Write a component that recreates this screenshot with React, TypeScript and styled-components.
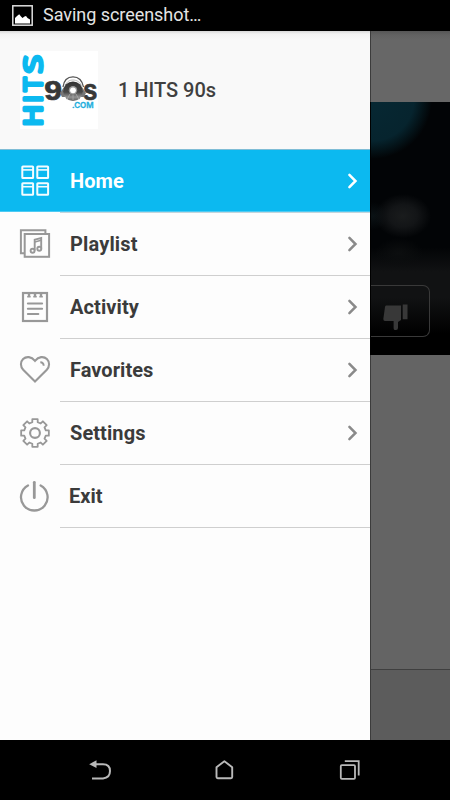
import React from "react";
import styled, { createGlobalStyle } from "styled-components";

const GlobalStyle = createGlobalStyle`
  * { box-sizing: border-box; }
  body { margin: 0; background: #000; font-family: Roboto, sans-serif; }
`;

const Screen = styled.div`
  width: 450px;
  height: 800px;
  display: flex;
  flex-direction: column;
  overflow: hidden;
  background: #000;
`;

const StatusBar = styled.header`
  height: 31px;
  flex: none;
  display: flex;
  align-items: center;
  gap: 10px;
  padding: 0 0 1px 12px;
  color: #e4e4e4;
  font-size: 18px;
  line-height: 22px;
  letter-spacing: -0.04px;
`;

const Body = styled.main`
  flex: 1;
  min-height: 0;
  display: flex;
`;

const Drawer = styled.aside`
  width: 370px;
  flex: none;
  background: #fdfdfd;
`;

const Profile = styled.div`
  height: 119px;
  display: flex;
  align-items: center;
  padding: 0 0 1px 20px;
  gap: 20px;
  background: linear-gradient(#d8d8d8 0, #f3f3f3 3px, #f9f9f9 9px);
  border-bottom: 1px solid #7fbdd6;
`;

const Station = styled.div`
  color: #404040;
  font-size: 20px;
  font-weight: 500;
`;

const Menu = styled.nav`
  display: flex;
  flex-direction: column;
`;

const MenuRow = styled.div<{ $active?: boolean }>`
  height: 63px;
  display: flex;
  padding-left: 19px;
  background: ${(p) => (p.$active ? "linear-gradient(#0cb9f0 61px, #8fdcf6 62px, #fdfdfd 62px)" : "#fdfdfd")};
  color: ${(p) => (p.$active ? "#f4fcff" : "#989898")};
`;

const IconCell = styled.div`
  width: 41px;
  padding-top: 15px;
  svg { display: block; }
`;

const RowContent = styled.div<{ $active?: boolean; $shift?: number }>`
  flex: 1;
  display: flex;
  align-items: center;
  justify-content: space-between;
  padding: 0 12px 0 ${(p) => 10 - (p.$shift ?? 0)}px;
  border-bottom: 1px solid ${(p) => (p.$active ? "#c3d5dc" : "#cfcfcf")};
`;

const Label = styled.span<{ $active?: boolean; $spacing: number }>`
  color: ${(p) => (p.$active ? "#fff" : "#3b3b3b")};
  font-size: 20px;
  font-weight: 700;
  line-height: 24px;
  letter-spacing: ${(p) => p.$spacing}px;
`;

const Behind = styled.section`
  flex: 1;
  display: flex;
  flex-direction: column;
  background: #646464;
  border-left: 1px solid #3c3c3c;
`;

const BehindHeader = styled.div`
  height: 71px;
  background: linear-gradient(#565656 0, #626262 4px, #676767 9px);
`;

const Artwork = styled.div`
  height: 253px;
  margin-left: -1px;
  overflow: hidden;
  padding-top: 183px;
  border-left: 1px solid #000;
  background:
    radial-gradient(ellipse 28px 22px at 32px 114px, #1a1c1d 0, #131517 50%, transparent 100%),
    radial-gradient(ellipse 15px 14px at 2px 114px, #0b1215 0, transparent 100%),
    radial-gradient(ellipse 24px 15px at 28px 151px, #0c0e0f 0, transparent 100%),
    radial-gradient(circle 60px at 1px -3px, #062833 0, #06242e 70%, #04151b 84%, transparent 100%),
    linear-gradient(#020406 0, #020406 145px, #111213 170px, #111213 195px, #000 232px);
`;

const DislikeButton = styled.div`
  width: 59px;
  height: 52px;
  border: 1px solid #393939;
  border-left: 0;
  border-radius: 0 7px 7px 0;
  display: flex;
  padding: 18px 0 0 11px;
`;

const BehindFooter = styled.div`
  height: 71px;
  margin-top: auto;
  background: #5c5c5c;
  border-top: 1px solid #3f3f3f;
`;

const NavBar = styled.footer`
  height: 60px;
  flex: none;
  display: flex;
  align-items: center;
  justify-content: space-between;
  padding: 0 90px 0 88px;
  color: #b9b9b9;
`;

const SavedImageIcon = () => (
  <svg width="21" height="21" viewBox="0 0 21 21">
    <rect x=".8" y=".8" width="19.4" height="19.4" fill="none" stroke="#dedede" strokeWidth="1.5" />
    <path d="M3 18.4V13L5 11 7.2 9.3 9 11.5 10.5 13 12.5 11.5 14 11 15.5 13 18 14.5V18.4Z" fill="#fff" />
  </svg>
);

const hitsLetters = [
  { glyph: "H", x: 0, width: 21.6 },
  { glyph: "I", x: 24.2, width: 7.2 },
  { glyph: "T", x: 35.3, width: 13.9 },
  { glyph: "S", x: 53.3, width: 18 },
];

const StationLogo = () => (
  <svg width="78" height="78" viewBox="0 0 78 78" overflow="visible">
    <defs>
      <linearGradient id="disc" x1="0" y1="0" x2="0" y2="1">
        <stop offset="0" stopColor="#333" />
        <stop offset=".55" stopColor="#484848" />
        <stop offset=".8" stopColor="#929292" />
        <stop offset="1" stopColor="#5c5c5c" />
      </linearGradient>
    </defs>
    <rect width="78" height="78" fill="#fff" />
    <g transform="translate(22 75.6) rotate(-90)" fontFamily="Open Sans" fontWeight="400" fontSize="25.5"
      fill="#0cb9f0" stroke="#0cb9f0" strokeWidth="3.4" strokeLinejoin="round">
      {hitsLetters.map(({ glyph, x, width }) => (
        <text key={glyph} x={x} y="0" textLength={width} lengthAdjust="spacingAndGlyphs">{glyph}</text>
      ))}
    </g>
    <g fontFamily="Liberation Sans" fontWeight="700" fill="#383838" stroke="#383838" strokeWidth=".7">
      <text x="24.2" y="49.3" fontSize="27" textLength="17.8" lengthAdjust="spacingAndGlyphs">9</text>
      <text x="63" y="49.3" fontSize="30" textLength="14.4" lengthAdjust="spacingAndGlyphs">s</text>
    </g>
    <path d="M43 36C44 28 48 25.8 53 25.8S62 28 63.5 36" fill="none" stroke="#555" strokeWidth="1.3" />
    <path d="M45 35C47 30 50 29 53 29S60 30.5 61.5 35" fill="none" stroke="#aaa" strokeWidth=".8" />
    <path d="M40 42 44 36 45 46 42 46ZM66 42 62 36 61 46 64 46Z" fill="#777" />
    <ellipse cx="53" cy="40.2" rx="9.8" ry="9.8" fill="url(#disc)" />
    <path d="M50 43 47 48.5M53 44V49.5M56 43 59 48.5" stroke="#aaa" strokeWidth=".8" />
    <circle cx="53" cy="39.3" r="4.2" fill="#999" />
    <circle cx="53" cy="39.3" r="2.9" fill="#fff" />
    <text x="52" y="56.8" fontFamily="Inter" fontWeight="600" fontSize="7.6" textLength="21.5"
      lengthAdjust="spacingAndGlyphs" fill="#22aedd" stroke="#22aedd" strokeWidth=".3">.COM</text>
  </svg>
);

const IconBox = ({ children }: { children: React.ReactNode }) => (
  <svg width="32" height="32" viewBox="0 0 32 32" fill="none" stroke="currentColor" strokeWidth="2">
    {children}
  </svg>
);

const HomeIcon = () => (
  <IconBox>
    {[[3.3, 1.4], [18.3, 1.4], [3.3, 18.2], [18.3, 18.2]].map(([x, y]) => (
      <g key={`${x}-${y}`} strokeWidth="2">
        <rect x={x} y={y} width="10.8" height="11.6" rx=".6" />
        <path d={`M${x} ${y + 3.5}h10.8`} strokeWidth="1.6" />
      </g>
    ))}
  </IconBox>
);

const PlaylistIcon = () => (
  <IconBox>
    <path d="M5 25.3H1.9V2.2H26.4V6" strokeWidth="2" />
    <rect x="5.7" y="6" width="24.4" height="22.8" strokeWidth="2" />
    <path d="M15.7 22.5V11.7L22.2 10V20.5" strokeWidth="1.9" />
    <path d="M15.7 14 22.2 12.3" strokeWidth="1.4" />
    <circle cx="13.6" cy="22.8" r="2" strokeWidth="1.9" />
    <circle cx="20.3" cy="20.8" r="2" strokeWidth="1.9" />
  </IconBox>
);

const ActivityIcon = () => (
  <IconBox>
    <rect x="4" y="2" width="24" height="28" strokeWidth="2.2" />
    <path d="M10 2V6M16 2V6M22 2V6" strokeWidth="2.4" />
    <path d="M8.2 5.7H11.6M14.3 5.7H17.7M20.4 5.7H23.8" strokeWidth="1.6" />
    <path d="M8.9 12.5H23.1M8.9 17.7H23.1M8.9 23H19.3" strokeWidth="2.1" strokeLinecap="round" />
  </IconBox>
);

const HeartIcon = () => (
  <IconBox>
    <path d="M16 27.5 4.2 15.8C1.2 12.6 1.2 8 4.1 5.1 7.3 2 12.4 2.4 16 6.9 19.6 2.4 24.7 2 27.9 5.1 30.8 8 30.8 12.6 27.8 15.8Z" strokeWidth="2.1" />
    <path d="M21.3 8.2C23.3 8.2 24.6 9.6 24.7 11.8" strokeWidth="1.9" />
  </IconBox>
);

const toothCorners: Array<[number, number]> = [
  [11.1, -14], [14.1, -11], [14.1, 11], [11.1, 14],
];
const gearPoints = Array.from({ length: 8 }, (_, tooth) =>
  toothCorners.map(([radius, offset]) => {
    const angle = ((tooth * 45 + offset) * Math.PI) / 180;
    return `${(16 + radius * Math.cos(angle)).toFixed(2)},${(16 + radius * Math.sin(angle)).toFixed(2)}`;
  }).join(" ")
).join(" ");

const SettingsIcon = () => (
  <IconBox>
    <polygon points={gearPoints} strokeWidth="1.8" strokeLinejoin="round" />
    <circle cx="16" cy="16" r="4.9" strokeWidth="2.1" />
  </IconBox>
);

const ExitIcon = () => (
  <IconBox>
    <path d="M9 5.5A13.3 13.3 0 1 0 21.6 5.5" strokeWidth="2.3" strokeLinecap="round" />
    <path d="M15.3 2.3V17.7" strokeWidth="2.8" strokeLinecap="round" />
  </IconBox>
);

const Chevron = ({ active }: { active?: boolean }) => (
  <svg width="11" height="16" viewBox="0 0 11 16" fill="none">
    <path d="M2.4 1.8 8.5 8 2.4 14.2" stroke={active ? "#fff" : "#8a8a8a"} strokeWidth="2.5" strokeLinecap="round" />
  </svg>
);

const ThumbDownIcon = () => (
  <svg width="27" height="28" viewBox="0 0 27 28" fill="#383838">
    <path d="M4 1.5H19V16L16 18V24Q16 26 14 26H12.8Q11.6 26 11.6 24V17H3Q1.3 17 1.3 15L3 3Q3.2 1.5 4 1.5ZM20.7.5H25.5V15.2H20.7Z" />
  </svg>
);

const BackIcon = () => (
  <svg width="24" height="24" viewBox="0 0 24 24" fill="none">
    <path d="M7 6.2H15Q22 6.2 22 13T15 20.4H4" stroke="currentColor" strokeWidth="2" />
    <path d="M1.2 6.2 8.5 2.3V10Z" fill="currentColor" />
  </svg>
);

const HomeKeyIcon = () => (
  <svg width="24" height="24" viewBox="0 0 24 24" fill="none" stroke="currentColor" strokeWidth="1.9">
    <path d="M4.5 9.2 12.4 3.2 20.2 9.2V19Q20.2 20.2 19 20.2H5.7Q4.5 20.2 4.5 19Z" strokeLinejoin="round" />
  </svg>
);

const RecentsIcon = () => (
  <svg width="24" height="24" viewBox="0 0 24 24" fill="none" stroke="currentColor" strokeWidth="1.8">
    <rect x="4.8" y="7.2" width="14.2" height="13.6" rx="1" />
    <path d="M8.8 3.2H22.7V17.4" />
  </svg>
);

const items = [
  { label: "Home", icon: HomeIcon, spacing: 0.1, active: true },
  { label: "Playlist", icon: PlaylistIcon, spacing: 0.15 },
  { label: "Activity", icon: ActivityIcon, spacing: 0.1 },
  { label: "Favorites", icon: HeartIcon, spacing: 0.05 },
  { label: "Settings", icon: SettingsIcon, spacing: 0.08 },
  { label: "Exit", icon: ExitIcon, spacing: 0, shift: 1, plain: true },
];

export default function App() {
  return (
    <Screen>
      <GlobalStyle />
      <StatusBar>
        <SavedImageIcon />
        Saving screenshot…
      </StatusBar>
      <Body>
        <Drawer>
          <Profile>
            <StationLogo />
            <Station>1 HITS 90s</Station>
          </Profile>
          <Menu>
            {items.map(({ label, icon: Icon, spacing, active, shift, plain }) => (
              <MenuRow key={label} $active={active}>
                <IconCell><Icon /></IconCell>
                <RowContent $active={active} $shift={shift}>
                  <Label $active={active} $spacing={spacing}>{label}</Label>
                  {!plain && <Chevron active={active} />}
                </RowContent>
              </MenuRow>
            ))}
          </Menu>
        </Drawer>
        <Behind>
          <BehindHeader />
          <Artwork>
            <DislikeButton><ThumbDownIcon /></DislikeButton>
          </Artwork>
          <BehindFooter />
        </Behind>
      </Body>
      <NavBar>
        <BackIcon />
        <HomeKeyIcon />
        <RecentsIcon />
      </NavBar>
    </Screen>
  );
}
